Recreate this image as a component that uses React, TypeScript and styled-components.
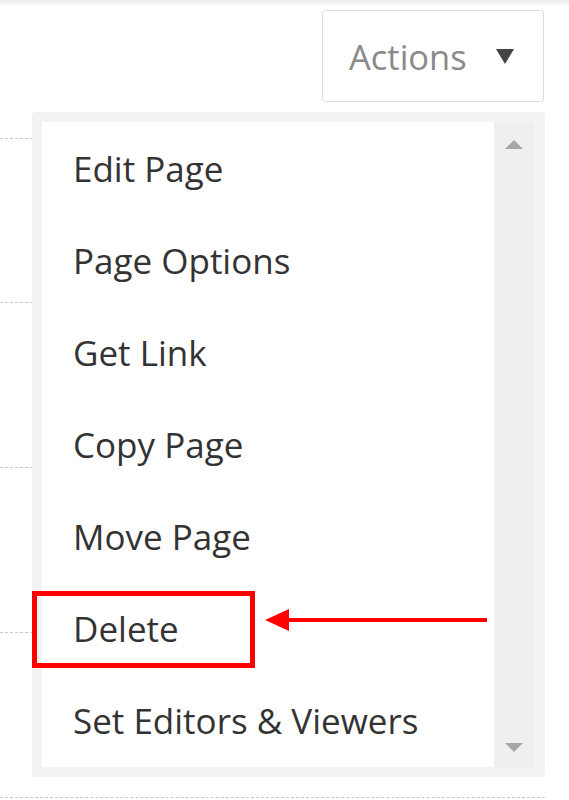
import styled, { createGlobalStyle } from 'styled-components';

const GlobalStyle = createGlobalStyle`
  html, body {
    margin: 0;
    padding: 0;
    background: #ffffff;
  }
  body {
    font-family: 'Open Sans', 'Noto Sans', sans-serif;
  }
`;

const Page = styled.div`
  position: relative;
  width: 569px;
  height: 800px;
  overflow: hidden;
  background: #ffffff;

  &::before {
    content: '';
    position: absolute;
    top: 0;
    left: 0;
    right: 0;
    height: 6px;
    background: linear-gradient(#ececec, rgba(255, 255, 255, 0));
  }
`;

const Header = styled.div`
  display: flex;
  justify-content: flex-end;
  padding: 10px 25px 0 0;
  height: 92px;
`;

const ActionsButton = styled.button`
  display: flex;
  align-items: center;
  justify-content: space-between;
  width: 222px;
  height: 92px;
  padding: 0 29px 0 26px;
  border: 1px solid #dcdcdc;
  border-radius: 4px;
  background: #ffffff;
  font-family: 'Open Sans', sans-serif;
  font-size: 34.5px;
  color: #8a8a8a;
  cursor: pointer;
`;

const Caret = styled.span<{ $dir: 'up' | 'down'; $color: string; $w: number; $h: number }>`
  width: 0;
  height: 0;
  border-left: ${(p) => p.$w / 2}px solid transparent;
  border-right: ${(p) => p.$w / 2}px solid transparent;
  ${(p) =>
    p.$dir === 'down'
      ? `border-top: ${p.$h}px solid ${p.$color};`
      : `border-bottom: ${p.$h}px solid ${p.$color};`}
`;

const Rows = styled.div`
  width: 545px;
`;

const Row = styled.div<{ $h: number }>`
  width: 100%;
  height: ${(p) => p.$h}px;
  border-bottom: 1px dashed #c8c8c8;
  box-sizing: border-box;
`;

const Dropdown = styled.div`
  position: absolute;
  left: 32px;
  top: 112px;
  width: 513px;
  height: 665px;
  box-sizing: border-box;
  padding: 10px 11px 10px 10px;
  background: #f3f3f3;
  border-radius: 4px;
  display: flex;
`;

const MenuList = styled.ul`
  flex: 1;
  margin: 0;
  padding: 0;
  list-style: none;
  background: #ffffff;
`;

const MenuItem = styled.li`
  position: relative;
  height: 92px;
  display: flex;
  align-items: center;
  padding-left: 31px;
  font-size: 35px;
  color: #333333;
  white-space: nowrap;
`;

const Scrollbar = styled.div`
  width: 40px;
  background: #efefef;
  display: flex;
  flex-direction: column;
  justify-content: space-between;
  align-items: center;
  padding: 18px 0 15px;
  box-sizing: border-box;
`;

const Highlight = styled.span`
  position: absolute;
  left: -10px;
  top: 9px;
  width: 223px;
  height: 77px;
  box-sizing: border-box;
  border: 5px solid #ff0000;
  pointer-events: none;
`;

const Pointer = styled.svg`
  position: absolute;
  left: 223px;
  top: 26px;
  overflow: visible;
`;

const items = [
  'Edit Page',
  'Page Options',
  'Get Link',
  'Copy Page',
  'Move Page',
  'Delete',
  'Set Editors & Viewers',
];

export default function App() {
  return (
    <Page>
      <GlobalStyle />
      <Header>
        <ActionsButton>
          <span>Actions</span>
          <Caret $dir="down" $color="#444444" $w={19} $h={15} />
        </ActionsButton>
      </Header>
      <Rows>
        <Row $h={37} />
        <Row $h={164} />
        <Row $h={165} />
        <Row $h={165} />
        <Row $h={165} />
      </Rows>
      <Dropdown>
        <MenuList>
          {items.map((label) => (
            <MenuItem key={label}>
              {label}
              {label === 'Delete' && (
                <>
                  <Highlight />
                  <Pointer width="264" height="24" viewBox="0 0 264 24">
                    <polygon points="0,12 24,1 24,23" fill="#ff0000" />
                    <rect x="22" y="10" width="200" height="4" fill="#ff0000" />
                  </Pointer>
                </>
              )}
            </MenuItem>
          ))}
        </MenuList>
        <Scrollbar>
          <Caret $dir="up" $color="#a6a6a6" $w={18} $h={9} />
          <Caret $dir="down" $color="#a6a6a6" $w={18} $h={9} />
        </Scrollbar>
      </Dropdown>
    </Page>
  );
}
